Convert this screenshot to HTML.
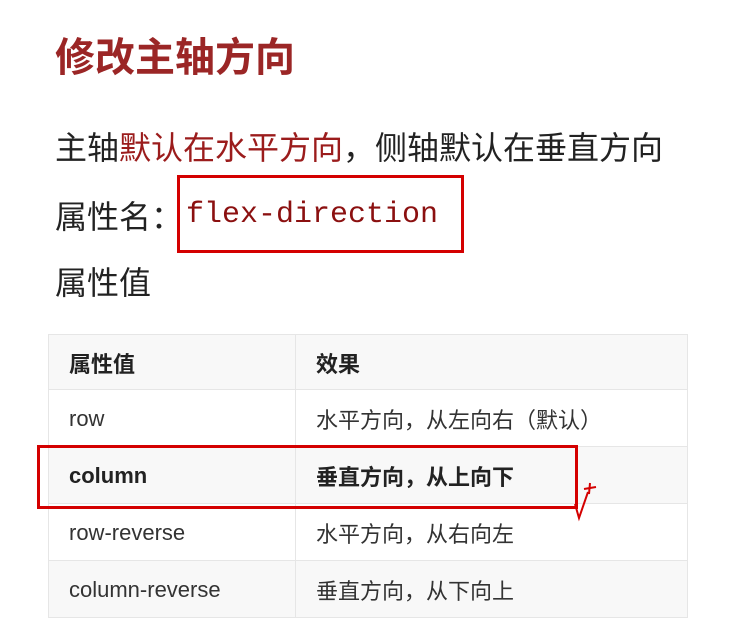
<!DOCTYPE html>
<html><head><meta charset="utf-8"><style>
body{margin:0;width:737px;height:641px;background:#fff;position:relative;overflow:hidden;font-family:"Liberation Sans","Noto Sans CJK SC",sans-serif;color:#222}
.a{position:absolute;white-space:nowrap}
.t{left:55px;top:25px;font-size:40px;font-weight:bold;color:#9b2626}
.l{font-size:32px;left:55px}
.r{color:#9b1c1c}
.box{position:absolute;border:3px solid #d40000}
table{position:absolute;left:48px;top:334px;border-collapse:collapse;width:640px;font-size:22px}
td{border:1px solid #e6e6e6;height:54px;padding:2px 0 0 20px;color:#333}
tr.h td{height:52px}
tr:nth-child(odd) td{background:#f8f8f8}
.b td{font-weight:bold;color:#222}
</style></head><body>
<div class="a t">修改主轴方向</div>
<div class="a l" style="top:123px">主轴<span class="r">默认在水平方向</span>，侧轴默认在垂直方向</div>
<div class="a l" style="top:192px">属性名：<span style="font-family:'Liberation Mono',monospace;color:#8b1010;font-size:30px;position:relative;top:-6px;left:3px">flex-direction</span></div>
<div class="a l" style="top:258px">属性值</div>
<div class="box" style="left:177px;top:175px;width:281px;height:72px"></div>
<table>
<tr class="b h"><td style="width:226px">属性值</td><td>效果</td></tr>
<tr><td>row</td><td>水平方向，从左向右（默认）</td></tr>
<tr class="b"><td>column</td><td>垂直方向，从上向下</td></tr>
<tr><td>row-reverse</td><td>水平方向，从右向左</td></tr>
<tr><td>column-reverse</td><td>垂直方向，从下向上</td></tr>
</table>
<div class="box" style="left:37px;top:445px;width:535px;height:58px"></div>
<svg class="a" style="left:570px;top:476px" width="40" height="50"><path d="M5 28 L9 42 L18 16 M14 13 L26 11 M20 7 L19 18" stroke="#d40000" stroke-width="2" fill="none"/></svg>
</body></html>
